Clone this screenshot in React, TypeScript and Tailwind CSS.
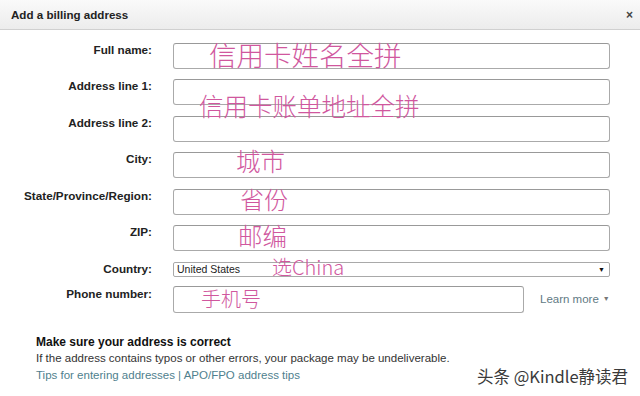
import React from "react";

const rows = [
  "Full name:",
  "Address line 1:",
  "Address line 2:",
  "City:",
  "State/Province/Region:",
  "ZIP:",
];

const pink = "absolute leading-none text-[#d0579e] font-light font-['Noto_Sans_CJK_SC',sans-serif]";

export default function App() {
  return (
    <div className="relative w-[640px] h-[396px] overflow-hidden bg-white font-['Liberation_Sans',Arial,sans-serif] text-[#111]">
      <div className="h-[30px] flex items-center justify-between pl-[11px] pr-[7px] border-b border-[#d0d0d0] bg-gradient-to-b from-[#fafafa] to-[#ececec]">
        <span className="text-[11.6px] font-bold text-[#222]">Add a billing address</span>
        <span className="text-[12px] font-bold text-[#444] leading-none">×</span>
      </div>

      <div className="pt-[13px] flex flex-col gap-[10.4px]">
        {rows.map((label) => (
          <div key={label} className="grid grid-cols-[152px_437px] gap-x-[21px] items-start">
            <span className="text-right text-[11.7px] font-bold leading-[13px] text-[#222] whitespace-nowrap">{label}</span>
            <input
              readOnly
              className="h-[26px] w-full rounded-[3px] border border-[#aaaaaa] border-t-[#999] bg-white outline-none"
            />
          </div>
        ))}
      </div>

      <div className="mt-[11px] grid grid-cols-[152px_437px] gap-x-[21px] items-start">
        <span className="text-right text-[11.7px] font-bold leading-[13px] text-[#222]">Country:</span>
        <div className="h-[15px] flex items-center justify-between pl-[3px] pr-[4px] border border-[#a9a9a9] rounded-[2px] bg-white">
          <span className="text-[10.5px] leading-none text-[#222]">United States</span>
          <span className="text-[7px] leading-none text-[#111]">▼</span>
        </div>
      </div>

      <div className="mt-[9px] grid grid-cols-[152px_437px] gap-x-[21px] items-start">
        <span className="text-right text-[11.7px] font-bold leading-[13px] text-[#222] pt-[1px]">Phone number:</span>
        <div className="flex items-center">
          <input
            readOnly
            className="h-[27px] w-[351px] rounded-[3px] border border-[#aaaaaa] border-t-[#999] bg-white outline-none"
          />
          <span className="ml-[16px] text-[11.5px] text-[#5f7a84] flex items-center gap-[4px]">
            Learn more <span className="text-[7px] text-[#777]">▼</span>
          </span>
        </div>
      </div>

      <div className="mt-[21px] pl-[36px] text-[11.5px] leading-[16.5px]">
        <div className="font-bold text-[12px] text-[#111]">Make sure your address is correct</div>
        <div className="text-[#333]">
          If the address contains typos or other errors, your package may be undeliverable.
        </div>
        <div className="text-[#4f7f8e]">Tips for entering addresses | APO/FPO address tips</div>
      </div>

      {/* pink annotations */}
      <div className={`${pink} left-[209px] top-[41px] text-[27.5px]`}>信用卡姓名全拼</div>
      <div className={`${pink} left-[199px] top-[94px] text-[24.5px]`}>信用卡账单地址全拼</div>
      <div className={`${pink} left-[236px] top-[149px] text-[24.5px]`}>城市</div>
      <div className={`${pink} left-[240px] top-[187px] text-[24px]`}>省份</div>
      <div className={`${pink} left-[238px] top-[224px] text-[24.5px]`}>邮编</div>
      <div className={`${pink} left-[272px] top-[257px] text-[20px]`}>选China</div>
      <div className={`${pink} left-[201px] top-[289px] text-[20px]`}>手机号</div>

      {/* watermark */}
      <div className="absolute left-[477px] top-[368px] text-[16.5px] leading-none text-[#3a3a3a] font-['Noto_Sans_CJK_SC',sans-serif]">头条 @Kindle静读君</div>
    </div>
  );
}
